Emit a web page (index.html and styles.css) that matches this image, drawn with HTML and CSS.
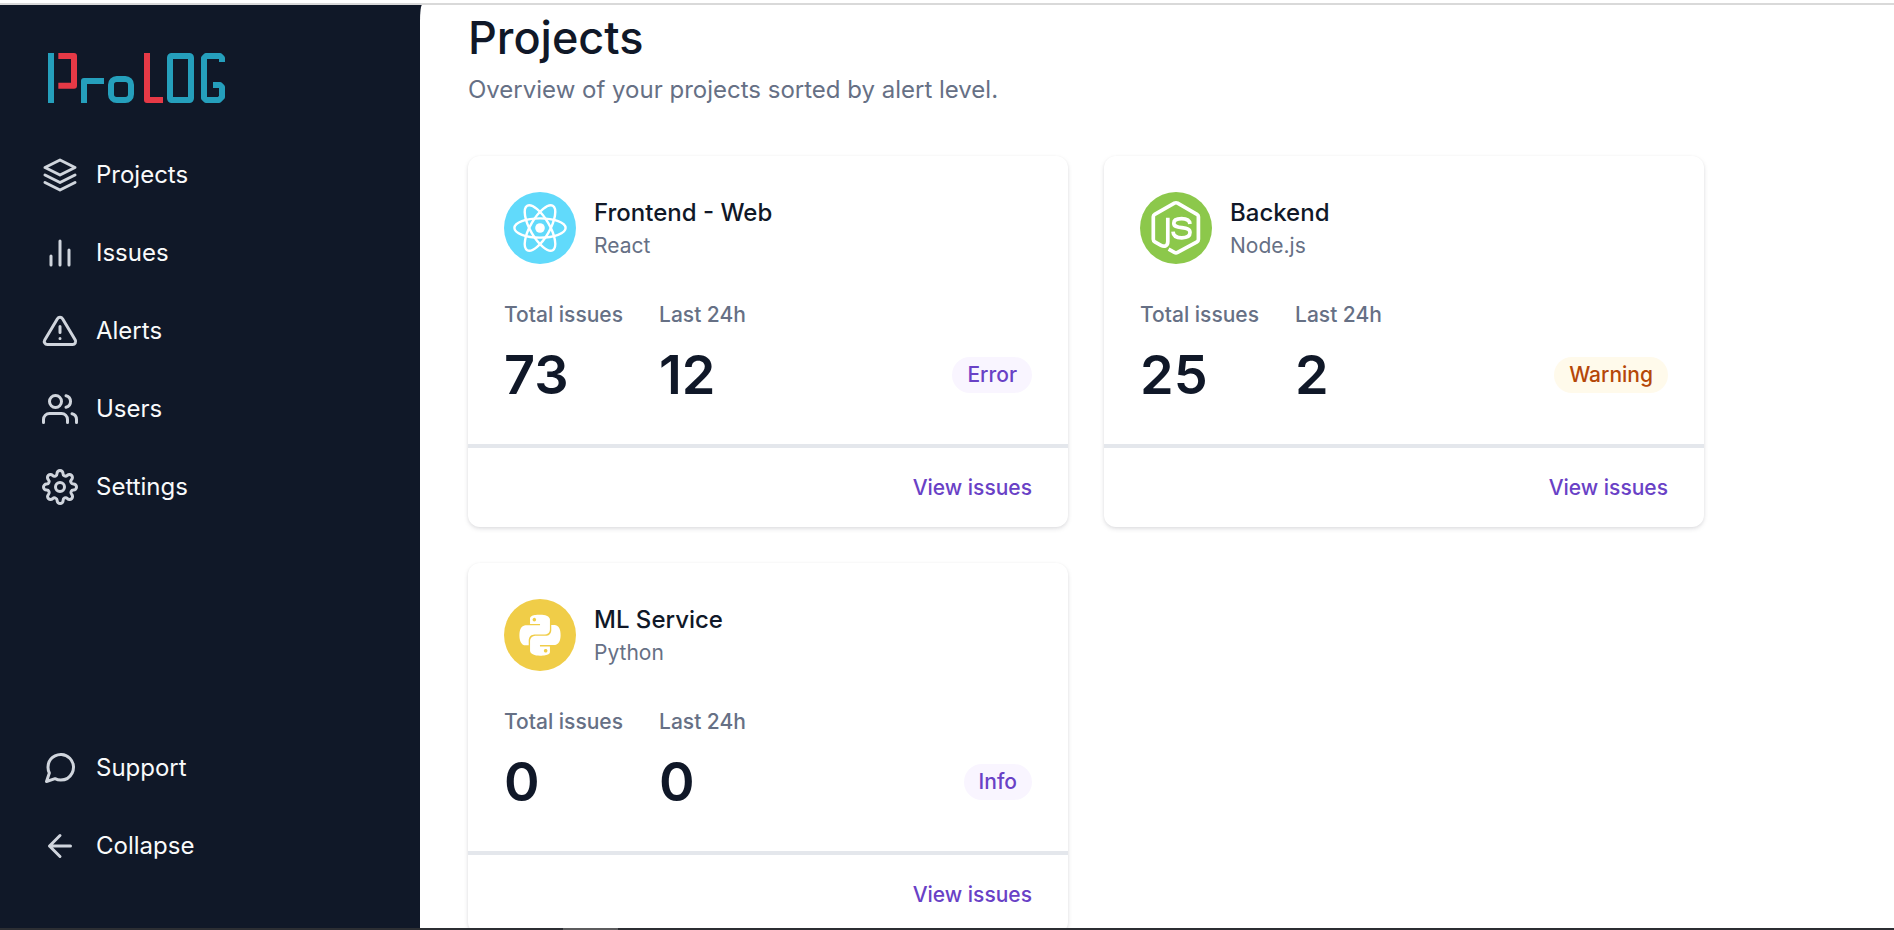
FILE: index.html
```html
<!DOCTYPE html>
<html lang="en">
<head>
<meta charset="utf-8">
<title>ProLog - Projects</title>
<link rel="stylesheet" href="styles.css">
</head>
<body>
<div class="top-edge"></div>
<div class="app">
  <aside class="sidebar">
    <a class="logo" href="#" aria-label="ProLog">
      <svg class="logo-art" viewBox="144 159 532 150" fill="none" stroke-width="18" stroke-linejoin="round">
        <g stroke="#259fbc">
          <path d="M153 159V309"/>
          <path d="M252 309V243H312"/>
          <rect x="333" y="237" width="60" height="63" rx="17"/>
          <rect x="510" y="168" width="63" height="132" rx="5"/>
          <path d="M666 186V174L660 168H618L612 174V294L618 300H657L666 291V261L660 255H639"/>
        </g>
        <g stroke="#e63946">
          <path d="M175 168H222V257H175"/>
          <path d="M441 159V300H489"/>
        </g>
      </svg>
    </a>
    <nav class="menu">
      <a class="menu-item" href="#">
        <svg class="icon" viewBox="0 0 24 24"><path d="M12 2 2 7l10 5 10-5-10-5z"/><path d="m2 17 10 5 10-5"/><path d="m2 12 10 5 10-5"/></svg>
        Projects
      </a>
      <a class="menu-item" href="#">
        <svg class="icon" viewBox="0 0 24 24"><path d="M18 20V10M12 20V4M6 20v-6"/></svg>
        Issues
      </a>
      <a class="menu-item" href="#">
        <svg class="icon" viewBox="0 0 24 24"><path d="M10.29 3.86 1.82 18a2 2 0 0 0 1.71 3h16.94a2 2 0 0 0 1.71-3L13.71 3.86a2 2 0 0 0-3.42 0z"/><path d="M12 9v4M12 17h.01"/></svg>
        Alerts
      </a>
      <a class="menu-item" href="#">
        <svg class="icon" viewBox="0 0 24 24"><path d="M17 21v-2a4 4 0 0 0-4-4H5a4 4 0 0 0-4 4v2"/><circle cx="9" cy="7" r="4"/><path d="M23 21v-2a4 4 0 0 0-3-3.87M16 3.13a4 4 0 0 1 0 7.75"/></svg>
        Users
      </a>
      <a class="menu-item" href="#">
        <svg class="icon" viewBox="0 0 24 24"><circle cx="12" cy="12" r="3"/><path d="M19.4 15a1.65 1.65 0 0 0 .33 1.82l.06.06a2 2 0 0 1 0 2.83 2 2 0 0 1-2.83 0l-.06-.06a1.65 1.65 0 0 0-1.82-.33 1.65 1.65 0 0 0-1 1.51V21a2 2 0 0 1-2 2 2 2 0 0 1-2-2v-.09A1.65 1.65 0 0 0 9 19.4a1.65 1.65 0 0 0-1.82.33l-.06.06a2 2 0 0 1-2.83 0 2 2 0 0 1 0-2.83l.06-.06a1.65 1.65 0 0 0 .33-1.82 1.65 1.65 0 0 0-1.51-1H3a2 2 0 0 1-2-2 2 2 0 0 1 2-2h.09A1.65 1.65 0 0 0 4.6 9a1.65 1.65 0 0 0-.33-1.82l-.06-.06a2 2 0 0 1 0-2.83 2 2 0 0 1 2.83 0l.06.06a1.65 1.65 0 0 0 1.82.33H9a1.65 1.65 0 0 0 1-1.51V3a2 2 0 0 1 2-2 2 2 0 0 1 2 2v.09a1.65 1.65 0 0 0 1 1.51 1.65 1.65 0 0 0 1.82-.33l.06-.06a2 2 0 0 1 2.83 0 2 2 0 0 1 0 2.83l-.06.06a1.65 1.65 0 0 0-.33 1.82V9a1.65 1.65 0 0 0 1.51 1H21a2 2 0 0 1 2 2 2 2 0 0 1-2 2h-.09a1.65 1.65 0 0 0-1.51 1z"/></svg>
        Settings
      </a>
    </nav>
    <div class="menu">
      <button class="menu-item" type="button">
        <svg class="icon" viewBox="0 0 24 24"><path d="M21 11.5a8.38 8.38 0 0 1-.9 3.8 8.5 8.5 0 0 1-7.6 4.7 8.38 8.38 0 0 1-3.8-.9L3 21l1.9-5.7a8.38 8.38 0 0 1-.9-3.8 8.5 8.5 0 0 1 4.7-7.6 8.38 8.38 0 0 1 3.8-.9h.5a8.48 8.48 0 0 1 8 8v.5z"/></svg>
        Support
      </button>
      <button class="menu-item" type="button">
        <svg class="icon" viewBox="0 0 24 24"><path d="M19 12H5M12 19l-7-7 7-7"/></svg>
        Collapse
      </button>
    </div>
  </aside>

  <main class="content">
    <h1 class="title">Projects</h1>
    <p class="subtitle">Overview of your projects sorted by alert level.</p>

    <div class="projects">
      <section class="card">
        <div class="card-body">
          <header class="card-head">
            <svg class="language" viewBox="0 0 72 72">
              <circle cx="36" cy="36" r="36" fill="#61dafb"/>
              <circle cx="36" cy="36" r="4.8" fill="#fff"/>
              <g fill="none" stroke="#fff" stroke-width="2.4">
                <ellipse cx="36" cy="36" rx="25.6" ry="9.6"/>
                <ellipse cx="36" cy="36" rx="25.6" ry="9.6" transform="rotate(60 36 36)"/>
                <ellipse cx="36" cy="36" rx="25.6" ry="9.6" transform="rotate(120 36 36)"/>
              </g>
            </svg>
            <div>
              <h2 class="name">Frontend - Web</h2>
              <p class="tech">React</p>
            </div>
          </header>
          <div class="stats">
            <div><div class="label">Total issues</div><div class="number">73</div></div>
            <div><div class="label">Last 24h</div><div class="number">12</div></div>
            <span class="badge">Error</span>
          </div>
        </div>
        <footer class="card-foot"><a class="view" href="#">View issues</a></footer>
      </section>

      <section class="card">
        <div class="card-body">
          <header class="card-head">
            <svg class="language" viewBox="0 0 72 72">
              <circle cx="36" cy="36" r="36" fill="#8cc84b"/>
              <g fill="none" stroke="#fff" stroke-width="3.7" stroke-linejoin="round">
                <path d="M27.8 25.8V49.5C27.8 54 24.5 55.2 21 53.3L14.8 49.8Q13.3 49 13.3 47.3V24.8Q13.3 23.2 14.7 22.4L34.4 11.2Q36 10.3 37.6 11.2L57 22.4Q58.4 23.2 58.4 24.8V47.3Q58.4 49 57 49.8L37.6 60.4Q36 61.3 34.4 60.4L28.6 57.2"/>
                <path d="M50 32C49.6 28.2 46.8 26.7 41.6 26.7C36.6 26.7 33.8 28.4 33.8 31.2C33.8 34.3 36.4 35 41.8 35.6C47.6 36.2 50 37.2 50 40.6C50 44.4 46.8 45.8 41.8 45.8C35.8 45.8 33.2 43.6 33 39.6"/>
              </g>
            </svg>
            <div>
              <h2 class="name">Backend</h2>
              <p class="tech">Node.js</p>
            </div>
          </header>
          <div class="stats">
            <div><div class="label">Total issues</div><div class="number">25</div></div>
            <div><div class="label">Last 24h</div><div class="number">2</div></div>
            <span class="badge badge-warning">Warning</span>
          </div>
        </div>
        <footer class="card-foot"><a class="view" href="#">View issues</a></footer>
      </section>

      <section class="card">
        <div class="card-body">
          <header class="card-head">
            <svg class="language" viewBox="0 0 72 72">
              <circle cx="36" cy="36" r="36" fill="#f0cd48"/>
              <path fill="#fff" transform="translate(15.5 15.7) scale(1.708)" d="M14.25.18l.9.2.73.26.59.3.45.32.34.34.25.34.16.33.1.3.04.26.02.2-.01.13V8.5l-.05.63-.13.55-.21.46-.26.38-.3.31-.33.25-.35.19-.35.14-.33.1-.3.07-.26.04-.21.02H8.77l-.69.05-.59.14-.5.22-.41.27-.33.32-.27.35-.2.36-.15.37-.1.35-.07.32-.04.27-.02.21v3.06H3.17l-.21-.03-.28-.07-.32-.12-.35-.18-.36-.26-.36-.36-.35-.46-.32-.59-.28-.73-.21-.88-.14-1.05-.05-1.23.06-1.22.16-1.04.24-.87.32-.71.36-.57.4-.44.42-.33.42-.24.4-.16.36-.1.32-.05.24-.01h.16l.06.01h8.16v-.83H6.18l-.01-2.75-.02-.37.05-.34.11-.31.17-.28.25-.26.31-.23.38-.2.44-.18.51-.15.58-.12.64-.1.71-.06.77-.04.84-.02 1.27.05zm-6.3 1.98l-.23.33-.08.41.08.41.23.34.33.22.41.09.41-.09.33-.22.23-.34.08-.41-.08-.41-.23-.33-.33-.22-.41-.09-.41.09zm13.09 3.95l.28.06.32.12.35.18.36.27.36.35.35.47.32.59.28.73.21.88.14 1.04.05 1.23-.06 1.23-.16 1.04-.24.86-.32.71-.36.57-.4.45-.42.33-.42.24-.4.16-.36.09-.32.05-.24.02-.16-.01h-8.22v.82h5.84l.01 2.76.02.36-.05.34-.11.31-.17.29-.25.25-.31.24-.38.2-.44.17-.51.15-.58.13-.64.09-.71.07-.77.04-.84.01-1.27-.04-1.07-.14-.9-.2-.73-.25-.59-.3-.45-.33-.34-.34-.25-.34-.16-.33-.1-.3-.04-.25-.02-.2.01-.13v-5.34l.05-.64.13-.54.21-.46.26-.38.3-.32.33-.24.35-.2.35-.14.33-.1.3-.06.26-.04.21-.02.13-.01h5.84l.69-.05.59-.14.5-.21.41-.28.33-.32.27-.35.2-.36.15-.36.1-.35.07-.32.04-.28.02-.21V6.07h2.09l.14.01zm-6.47 14.25l-.23.33-.08.41.08.41.23.33.33.23.41.08.41-.08.33-.23.23-.33.08-.41-.08-.41-.23-.33-.33-.23-.41-.08-.41.08z"/>
            </svg>
            <div>
              <h2 class="name">ML Service</h2>
              <p class="tech">Python</p>
            </div>
          </header>
          <div class="stats">
            <div><div class="label">Total issues</div><div class="number">0</div></div>
            <div><div class="label">Last 24h</div><div class="number">0</div></div>
            <span class="badge">Info</span>
          </div>
        </div>
        <footer class="card-foot"><a class="view" href="#">View issues</a></footer>
      </section>
    </div>
  </main>
</div>
<div class="bottom-edge"><div class="bottom-mark"></div></div>
</body>
</html>
```

FILE: styles.css
```css
* {
  box-sizing: border-box;
}

body {
  margin: 0;
  height: 100vh;
  display: flex;
  flex-direction: column;
  overflow: hidden;
  background: #fff;
  color: #101828;
  font-family: Inter, "Liberation Sans", sans-serif;
  font-size: 24px;
  line-height: 36px;
}

h1,
h2,
p {
  margin: 0;
}

a {
  text-decoration: none;
}

.top-edge {
  flex: none;
  height: 5px;
  border-bottom: 2px solid #d9d9d9;
}

.bottom-edge {
  flex: none;
  display: flex;
  height: 2px;
  padding-left: 563px;
  background: #2c2e33;
}

.bottom-mark {
  width: 55px;
  background: #5c5c5e;
}

.app {
  flex: 1;
  min-height: 0;
  display: flex;
  background: #101828;
}

.sidebar {
  flex: none;
  width: 420px;
  display: flex;
  flex-direction: column;
  padding: 48px 24px 46px;
}

.logo {
  padding-left: 24px;
  margin-bottom: 36px;
}

.logo-art {
  display: block;
  height: 50px;
}

.menu {
  display: flex;
  flex-direction: column;
  gap: 6px;
}

nav.menu {
  flex: 1;
}

.menu-item {
  display: flex;
  align-items: center;
  gap: 18px;
  padding: 18px;
  border: 0;
  background: none;
  color: #f9fafb;
  font: inherit;
  text-align: left;
}

.icon {
  width: 36px;
  height: 36px;
  fill: none;
  stroke: #d0d5dd;
  stroke-width: 2;
  stroke-linecap: round;
  stroke-linejoin: round;
}

.content {
  flex: 1;
  min-width: 0;
  overflow: hidden;
  padding: 4px 48px;
  background: #fff;
  border-top-left-radius: 2px 16px;
}

.title {
  margin-bottom: 6px;
  font-size: 45px;
  font-weight: 500;
  line-height: 57px;
}

.subtitle {
  margin-bottom: 48px;
  color: #667085;
}

.projects {
  display: grid;
  grid-template-columns: 1fr 1fr;
  gap: 36px;
  max-width: 1236px;
}

.card {
  border-radius: 12px;
  background: #fff;
  box-shadow: 0 2px 5px rgba(16, 24, 40, 0.1), 0 1px 3px rgba(16, 24, 40, 0.06);
}

.card-body {
  padding: 36px;
}

.card-head {
  display: flex;
  align-items: center;
  gap: 18px;
  margin-bottom: 36px;
}

.language {
  width: 72px;
  height: 72px;
}

.name {
  font-size: 24px;
  font-weight: 500;
}

.tech {
  color: #667085;
  font-size: 21px;
  line-height: 30px;
}

.stats {
  display: flex;
  align-items: flex-end;
  gap: 36px;
}

.label {
  margin-bottom: 12px;
  color: #667085;
  font-size: 21px;
  font-weight: 500;
  line-height: 30px;
}

.number {
  font-size: 54px;
  font-weight: 600;
  line-height: 66px;
}

.badge {
  margin: 0 0 15px auto;
  padding: 3px 15px;
  border-radius: 18px;
  background: #f9f5ff;
  color: #6941c6;
  font-size: 21px;
  font-weight: 500;
  line-height: 30px;
}

.badge-warning {
  background: #fffaeb;
  color: #b54708;
}

.card-foot {
  display: flex;
  justify-content: flex-end;
  padding: 24px 36px;
  border-top: 4px solid #e4e7ec;
}

.view {
  color: #6941c6;
  font-size: 21px;
  font-weight: 500;
  line-height: 31px;
}
```
